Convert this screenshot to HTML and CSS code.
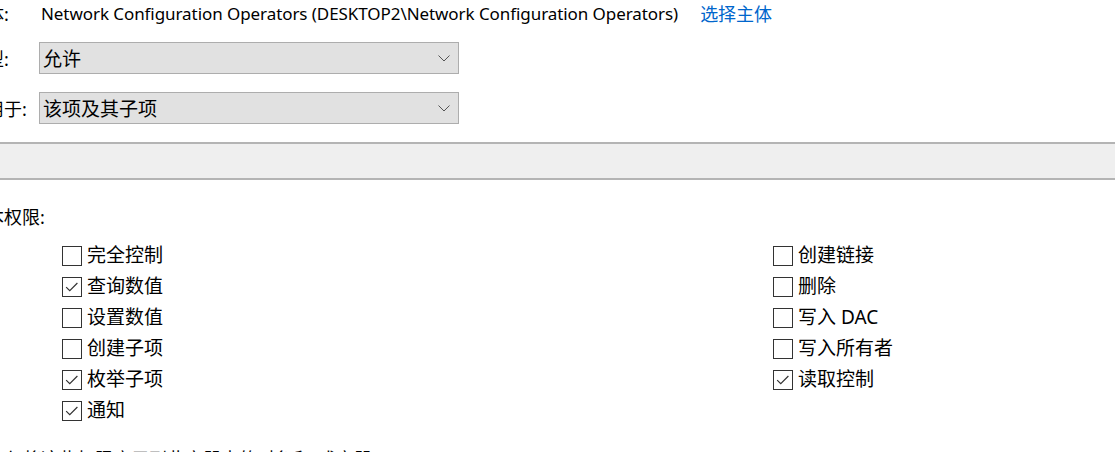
FILE: index.html
```html
<!DOCTYPE html>
<html lang="zh-CN">
<head>
<meta charset="utf-8">
<title>权限项目</title>
<link rel="stylesheet" href="styles.css">
</head>
<body>
<div class="dialog">
  <div class="field-row principal-row">
    <span class="label">主体:</span>
    <span class="principal">Network Configuration Operators (DESKTOP2\Network Configuration Operators)</span>
    <a class="link" href="#">选择主体</a>
  </div>
  <div class="field-row select-row first-select">
    <span class="label">类型:</span>
    <div class="select"><span>允许</span>
      <svg class="chev" width="12" height="7" viewBox="0 0 12 7"><polyline points="0.5,0.5 6,6 11.5,0.5" fill="none" stroke="#555" stroke-width="1"/></svg>
    </div>
  </div>
  <div class="field-row select-row">
    <span class="label">应用于:</span>
    <div class="select"><span>该项及其子项</span>
      <svg class="chev" width="12" height="7" viewBox="0 0 12 7"><polyline points="0.5,0.5 6,6 11.5,0.5" fill="none" stroke="#555" stroke-width="1"/></svg>
    </div>
  </div>
</div>
<div class="bar"></div>
<div class="dialog">
  <div class="perm-label">基本权限:</div>
  <div class="perms">
    <div class="col">
      <label class="check"><span class="box"></span>完全控制</label>
      <label class="check"><span class="box"><svg viewBox="0 0 20 20" width="19" height="19"><polyline points="3.5,9.5 7.5,13.5 16,5" fill="none" stroke="#333" stroke-width="1.3"/></svg></span>查询数值</label>
      <label class="check"><span class="box"></span>设置数值</label>
      <label class="check"><span class="box"></span>创建子项</label>
      <label class="check"><span class="box"><svg viewBox="0 0 20 20" width="19" height="19"><polyline points="3.5,9.5 7.5,13.5 16,5" fill="none" stroke="#333" stroke-width="1.3"/></svg></span>枚举子项</label>
      <label class="check"><span class="box"><svg viewBox="0 0 20 20" width="19" height="19"><polyline points="3.5,9.5 7.5,13.5 16,5" fill="none" stroke="#333" stroke-width="1.3"/></svg></span>通知</label>
    </div>
    <div class="col">
      <label class="check"><span class="box"></span>创建链接</label>
      <label class="check"><span class="box"></span>删除</label>
      <label class="check"><span class="box"></span>写入 DAC</label>
      <label class="check"><span class="box"></span>写入所有者</label>
      <label class="check"><span class="box"><svg viewBox="0 0 20 20" width="19" height="19"><polyline points="3.5,9.5 7.5,13.5 16,5" fill="none" stroke="#333" stroke-width="1.3"/></svg></span>读取控制</label>
    </div>
  </div>
  <div class="footnote">仅将这些权限应用到此容器中的对象和/或容器</div>
</div>
</body>
</html>
```
FILE: styles.css
```css
html, body {
  margin: 0;
  padding: 0;
  background: #ffffff;
  overflow: hidden;
}
body {
  width: 1115px;
  height: 452px;
  font-family: "Noto Sans", "Noto Sans CJK SC", sans-serif;
  font-size: 18px;
  color: #000;
}
.dialog {
  margin-left: -32px;
}
.field-row {
  display: flex;
  align-items: center;
}
.label {
  width: 71px;
  flex: none;
  white-space: nowrap;
}
.principal-row {
  height: 26px;
}
.principal {
  margin-left: 2px;
  font-size: 17px;
  letter-spacing: -0.07px;
  white-space: nowrap;
}
.link {
  margin-left: 22px;
  color: #0066cc;
  text-decoration: none;
  white-space: nowrap;
}
.select-row {
  margin-top: 18px;
}
.first-select {
  margin-top: 16px;
}
.select {
  box-sizing: border-box;
  width: 420px;
  height: 32px;
  border: 1px solid #adadad;
  background: #e1e1e1;
  display: flex;
  align-items: center;
  justify-content: space-between;
  padding: 0 8px 0 3px;
  font-size: 19px;
}
.chev {
  display: block;
}
.bar {
  margin-top: 18px;
  height: 34px;
  border-top: 2px solid #b4b4b4;
  border-bottom: 2px solid #b4b4b4;
  background: #efefef;
}
.perm-label {
  margin-top: 24px;
  height: 26px;
  line-height: 26px;
}
.perms {
  margin-top: 9px;
  display: grid;
  grid-template-columns: 711px 1fr;
  padding-left: 94px;
}
.col {
  display: flex;
  flex-direction: column;
}
.check {
  display: flex;
  align-items: center;
  height: 31px;
  gap: 5px;
  font-size: 19px;
  line-height: 26px;
  white-space: nowrap;
}
.check .box {
  margin-top: 3px;
}
.box {
  box-sizing: border-box;
  flex: none;
  width: 20px;
  height: 20px;
  border: 1px solid #333333;
  background: #fff;
  display: flex;
  align-items: center;
  justify-content: center;
}
.box svg {
  display: block;
}
.footnote {
  margin-top: 21px;
  margin-left: 37px;
  line-height: 26px;
  white-space: nowrap;
}
```
